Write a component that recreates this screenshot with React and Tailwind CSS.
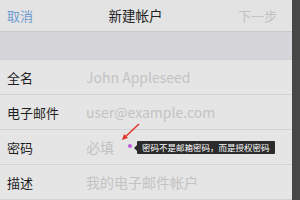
export default function App() {
  const font = { fontFamily: '"Noto Sans CJK SC", "Noto Sans", sans-serif' };
  const rows = [
    ["全名", "John Appleseed"],
    ["电子邮件", "user@example.com"],
    ["密码", "必填"],
    ["描述", "我的电子邮件帐户"],
  ];
  return (
    <div className="w-[300px] h-[200px] overflow-hidden flex bg-[#474747]" style={font}>
      <div className="w-[292px] h-full flex flex-col bg-[#e4e4e4] relative">
        <div className="h-[32px] flex items-center justify-between px-[7px] border-b border-[#c9c9c9] bg-[#e3e3e3]">
          <span className="text-[13px] text-[#6d9bd1] leading-none">取消</span>
          <span className="text-[13.5px] text-[#222] leading-none">新建帐户</span>
          <span className="text-[13px] text-[#c2c2c2] leading-none pr-[8px]">下一步</span>
        </div>
        <div className="h-[28px] bg-[#d6d6da] border-b border-[#d0d0d0]"></div>
        {rows.map(([l, v], i) => (
          <div key={i} className="h-[35px] flex items-center border-b border-[#d2d2d2] bg-[#e5e5e5]">
            <span className="w-[86px] pl-[7px] text-[13px] text-[#1e1e1e] leading-none">{l}</span>
            <span className="text-[14px] text-[#c3c3c3] leading-none">{v}</span>
          </div>
        ))}
        <div className="absolute left-[128px] top-[144px] w-[4px] h-[4px] rounded-full bg-[#c05bd6]"></div>
        <div className="absolute left-[134px] top-[144.5px] w-0 h-0 border-y-[3px] border-y-transparent border-r-[3px] border-r-[#2b2b2b]"></div>
        <div className="absolute left-[137px] top-[141px] h-[13px] px-[5px] flex items-center bg-[#2b2b2b] rounded-[1px]">
          <span className="text-[8.5px] text-white leading-none">密码不是邮箱密码，而是授权密码</span>
        </div>
        <svg className="absolute left-0 top-0" width="292" height="200">
          <line x1="124" y1="138" x2="139" y2="124" stroke="#e0362c" strokeWidth="1.5" />
          <path d="M122 140 L124 134 L128 138 Z" fill="#e0362c" />
        </svg>
      </div>
    </div>
  );
}
